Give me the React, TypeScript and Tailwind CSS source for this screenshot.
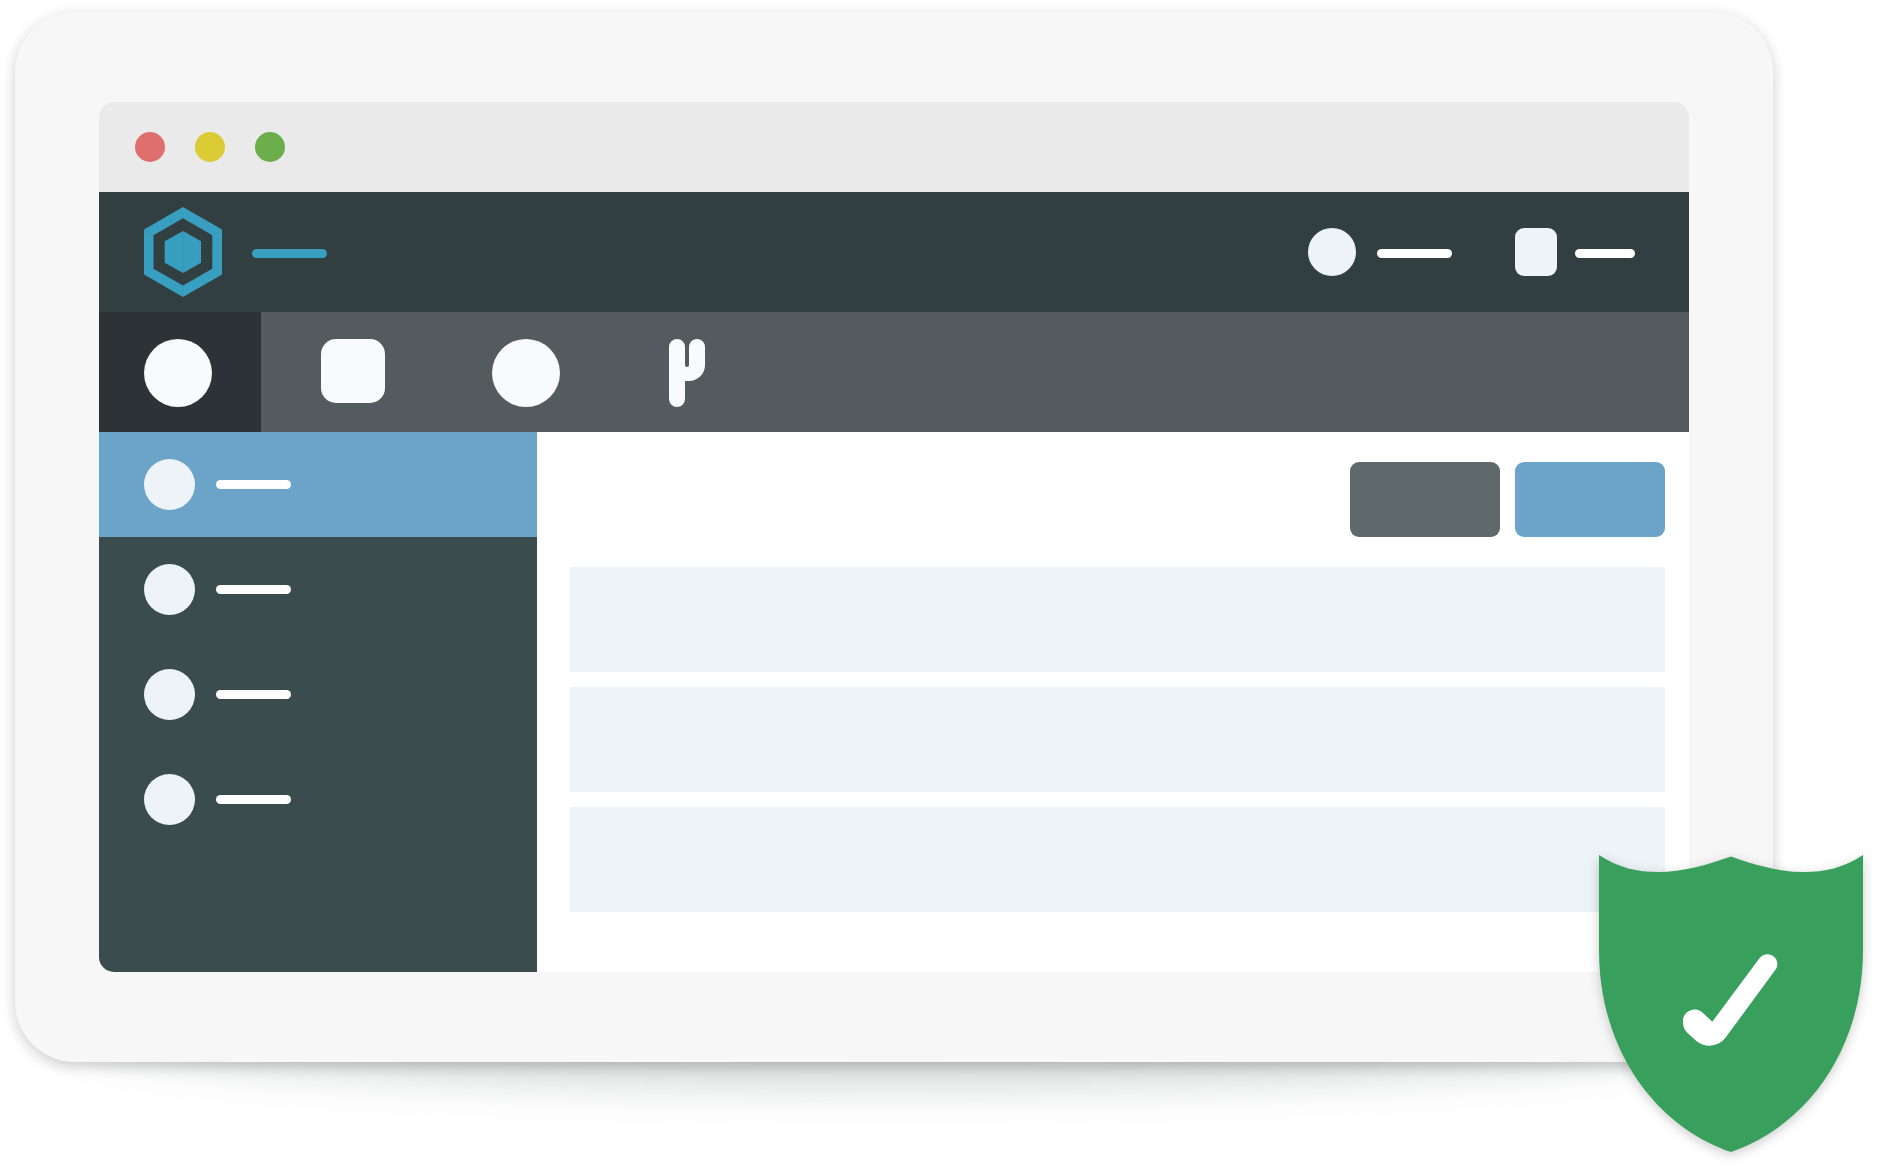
import clsx from "clsx";

interface SidebarItem {
  id: string;
  active?: boolean;
}

const windowDots = ["bg-[#df6e6e]", "bg-[#dbcb35]", "bg-[#6bae4b]"];

const sidebarItems: SidebarItem[] = [
  { id: "overview", active: true },
  { id: "projects" },
  { id: "reports" },
  { id: "settings" },
];

const rows = ["first", "second", "third"];

function Line({ className }: { className?: string }) {
  return <span className={clsx("block h-[9px] rounded-full", className)} />;
}

function Logo() {
  return (
    <svg width="78" height="90" viewBox="0 0 78 90" aria-hidden="true">
      <path
        fill="#389fc0"
        fillRule="evenodd"
        d="M39 0 78 22.5v45L39 90 0 67.5v-45L39 0Zm0 11.2L9.5 28.2v33.6L39 78.5l29.3-16.7V28.2L39 11.2Z"
      />
      <path fill="#389fc0" d="M39 24 57 34.3v21.4L39 66 20.7 55.7V34.3L39 24Z" />
      {/* Fold lines */}
      <path
        fill="none"
        stroke="#323f40"
        strokeOpacity="0.2"
        strokeWidth="0.6"
        d="m0 22.5 9.5 5.7M78 22.5l-9.7 5.7M38.5 78.5V90M38.5 24v42"
      />
    </svg>
  );
}

function CactusIcon() {
  return (
    <svg width="36" height="68" viewBox="0 0 36 68" aria-hidden="true">
      <path
        fill="#f8fafc"
        d="M8 0a8 8 0 0 1 8 8v18a2 2 0 0 0 4 0V8a8 8 0 0 1 16 0v18a16 16 0 0 1-16 16h-4v18a8 8 0 0 1-16 0V8a8 8 0 0 1 8-8Z"
      />
    </svg>
  );
}

function Shield() {
  return (
    <svg
      className="absolute -right-[90px] -bottom-[90px] overflow-visible drop-shadow-[0_3px_6px_rgba(0,0,0,0.2)]"
      width="264"
      height="297"
      viewBox="0 0 264 297"
      role="img"
      aria-label="Protected"
    >
      <path
        fill="#399f5c"
        d="M0 0C20 13 38 17 59 17c25 0 49-7 73-15.500 24 8.500 48 15.500 73 15.500 21 0 39-4 59-17v95c0 101-58 177-132 202C58 272 0 196 0 95V0Z"
      />
      <path
        fill="#fff"
        d="M84 167c0 4 1 7.500 4.300 10.700l8.700 8a20.500 20.500 0 0 0 29.300-2.700l50.700-69a9.900 9.900 0 0 0-16-11.500l-47.700 64.200-9-8.500A11.800 11.800 0 0 0 84 167Z"
      />
    </svg>
  );
}

function Header() {
  return (
    <header className="flex h-[120px] items-center justify-between bg-[#323f40] pr-[54px] pl-[45px]">
      <a href="#" aria-label="Home" className="flex items-center gap-[30px]">
        <Logo />
        <Line className="mt-[3px] w-[75px] bg-[#389fc0]" />
      </a>

      <div className="flex gap-[63px]">
        <button aria-label="Account" className="flex items-center gap-[21px]">
          <span className="size-12 rounded-full bg-[#edf3f6]" />
          <Line className="mt-[3px] w-[75px] bg-white" />
        </button>
        <button aria-label="Documents" className="flex items-center gap-[18px]">
          <span className="h-12 w-[42px] rounded-[9px] bg-[#edf3f6]" />
          <Line className="mt-[3px] w-[60px] bg-white" />
        </button>
      </div>
    </header>
  );
}

function Tabs() {
  return (
    <nav className="flex h-[120px] bg-[#535b5e]">
      <button aria-label="Dashboard" className="mr-[60px] flex w-[162px] bg-[#2d3236] pt-[27px] pl-[45px]">
        <span className="size-[68px] rounded-full bg-[#f8fafc]" />
      </button>
      <button aria-label="Apps" className="flex w-[171px] pt-[27px]">
        <span className="size-16 rounded-[15px] bg-[#f8fafc]" />
      </button>
      <button aria-label="People" className="flex w-[177px] pt-[27px]">
        <span className="size-[68px] rounded-full bg-[#f8fafc]" />
      </button>
      <button aria-label="Plants" className="flex pt-[27px]">
        <CactusIcon />
      </button>
    </nav>
  );
}

function Sidebar() {
  return (
    <aside className="w-[438px] shrink-0 bg-[#3b4c4f]">
      {sidebarItems.map((item) => (
        <button
          key={item.id}
          aria-label={item.id}
          className={clsx(
            "flex h-[105px] w-full items-center gap-[21px] pl-[45px]",
            item.active && "bg-[#6ca3c9]"
          )}
        >
          <span className="size-[51px] rounded-full bg-[#edf3f6]" />
          <Line className="w-[75px] bg-white" />
        </button>
      ))}
    </aside>
  );
}

export default function App() {
  return (
    <div className="overflow-hidden bg-white pt-3 pr-[105px] pb-[108px] pl-[15px]">
      <div className="relative isolate">
        {/* Soft shadow on the ground */}
        <div className="absolute inset-x-[60px] -bottom-[24px] -z-10 h-[105px] rounded-[50%] bg-[#2a3030]/20 blur-[20px]" />

        <div className="rounded-[60px] bg-[#f7f7f7] px-[84px] py-[90px] shadow-[0_4px_14px_rgba(0,0,0,0.2)]">
          <div className="overflow-hidden rounded-[15px] bg-white">
            {/* Title bar */}
            <div className="flex h-[90px] items-center gap-[30px] bg-[#eaeaea] px-9">
              {windowDots.map((color) => (
                <span key={color} className={clsx("size-[30px] rounded-full", color)} />
              ))}
            </div>

            <Header />
            <Tabs />

            <div className="flex">
              <Sidebar />
              <main className="flex-1 pt-[30px] pr-6 pb-[60px] pl-[33px]">
                <div className="mb-[30px] flex justify-end gap-[15px]">
                  <button aria-label="Cancel" className="h-[75px] w-[150px] rounded-[9px] bg-[#5e696b]" />
                  <button aria-label="Save" className="h-[75px] w-[150px] rounded-[9px] bg-[#6ca3c9]" />
                </div>
                <div className="space-y-[15px]">
                  {rows.map((row) => (
                    <div key={row} className="h-[105px] bg-[#edf3f6]" />
                  ))}
                </div>
              </main>
            </div>
          </div>
        </div>

        <Shield />
      </div>
    </div>
  );
}
